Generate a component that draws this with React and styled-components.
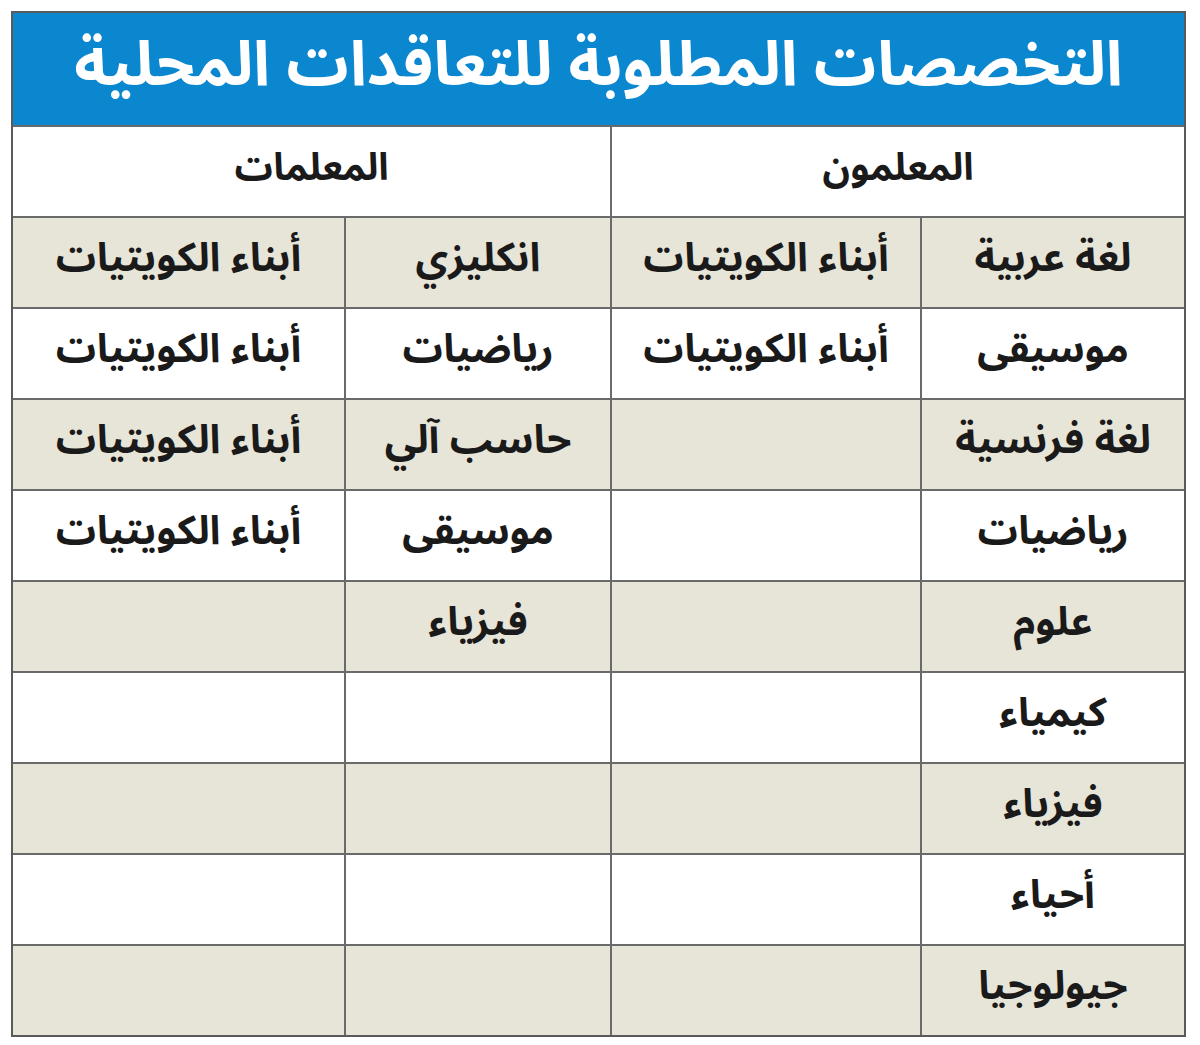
import React from 'react';
import styled, { createGlobalStyle } from 'styled-components';

const GlobalStyle = createGlobalStyle`
  html, body {
    margin: 0;
    padding: 0;
    background: #fff;
  }
  body {
    font-family: "Noto Sans Arabic", "Noto Naskh Arabic", "DejaVu Sans", sans-serif;
  }
`;

const rows = [
  ['لغة عربية', 'أبناء الكويتيات', 'انكليزي', 'أبناء الكويتيات'],
  ['موسيقى', 'أبناء الكويتيات', 'رياضيات', 'أبناء الكويتيات'],
  ['لغة فرنسية', '', 'حاسب آلي', 'أبناء الكويتيات'],
  ['رياضيات', '', 'موسيقى', 'أبناء الكويتيات'],
  ['علوم', '', 'فيزياء', ''],
  ['كيمياء', '', '', ''],
  ['فيزياء', '', '', ''],
  ['أحياء', '', '', ''],
  ['جيولوجيا', '', '', ''],
];

const Page = styled.div`
  padding: 11px 14px 7px 11px;
`;

const Table = styled.div`
  direction: rtl;
  border: 2px solid #5a5a5a;
  background: #6a6a6a;
  display: grid;
  grid-template-columns: 262px 308px 264px 1fr;
  grid-template-rows: 112px;
  grid-auto-rows: 89px;
  gap: 2px;
`;

const Title = styled.div`
  grid-column: 1 / -1;
  background: #0b87d0;
  color: #fff;
  display: flex;
  align-items: center;
  justify-content: center;
  font-size: 62px;
  font-weight: 700;
  padding-bottom: 8px;
  box-sizing: border-box;
  white-space: nowrap;
`;

const Cell = styled.div`
  grid-column: span ${(p) => p.$span || 1};
  background: ${(p) => (p.$shaded ? '#e7e4d8' : '#fff')};
  color: #1a1a1a;
  display: flex;
  align-items: center;
  justify-content: center;
  font-size: ${(p) => (p.$head ? '38px' : '40px')};
  font-weight: 700;
  padding-bottom: 8px;
  box-sizing: border-box;
  white-space: nowrap;
`;

export default function App() {
  return (
    <>
      <GlobalStyle />
      <Page>
        <Table>
          <Title>التخصصات المطلوبة للتعاقدات المحلية</Title>
          <Cell $span={2} $head>المعلمون</Cell>
          <Cell $span={2} $head>المعلمات</Cell>
          {rows.map((row, i) =>
            row.map((text, j) => (
              <Cell key={`${i}-${j}`} $shaded={i % 2 === 0}>
                {text}
              </Cell>
            ))
          )}
        </Table>
      </Page>
    </>
  );
}
